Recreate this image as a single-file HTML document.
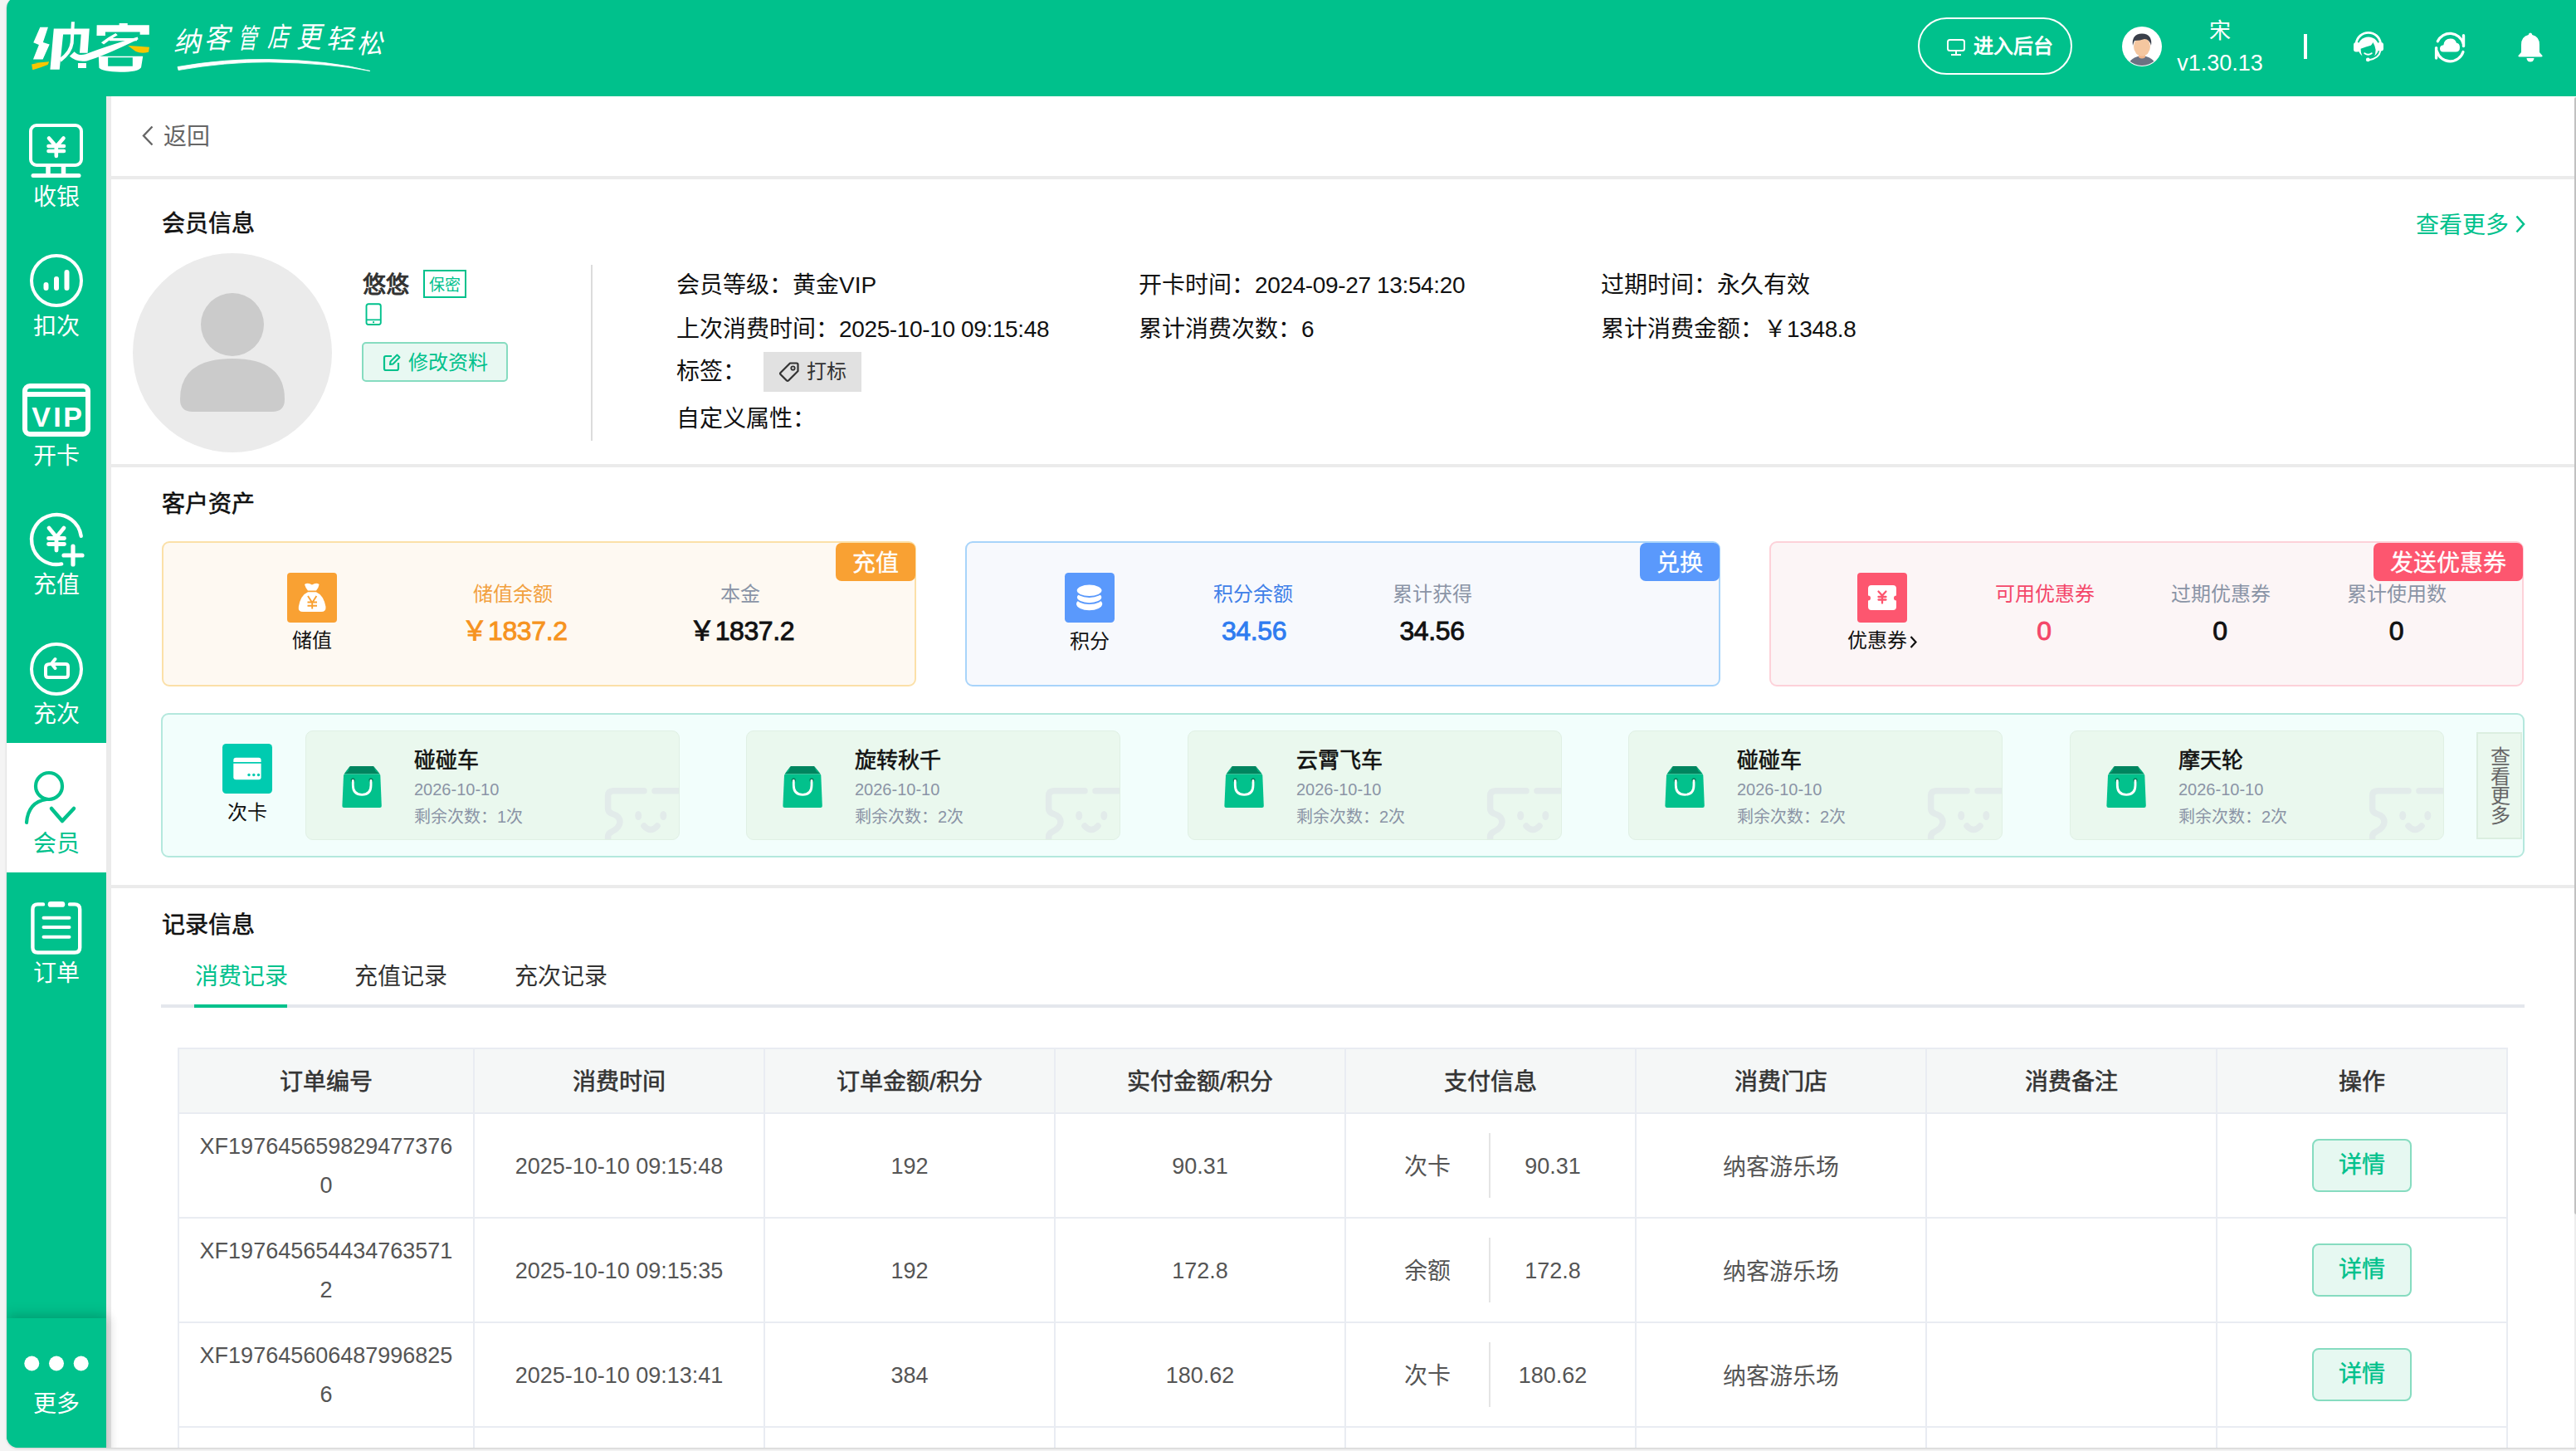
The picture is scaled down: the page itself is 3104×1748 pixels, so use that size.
<!DOCTYPE html>
<html lang="zh-CN">
<head>
<meta charset="utf-8">
<style>
*{box-sizing:border-box;margin:0;padding:0}
html,body{width:3104px;height:1748px;overflow:hidden;background:#f4f4f4;font-family:"Liberation Sans",sans-serif;}
.a{position:absolute;line-height:1;white-space:nowrap}
#win{position:absolute;left:8px;top:-4px;width:3110px;height:1748px;border-radius:14px;overflow:hidden;background:#fff;box-shadow:0 1px 3px rgba(0,0,0,0.18)}
#pg{position:absolute;left:-8px;top:4px;width:3104px;height:1748px}
#hdr{position:absolute;left:0;top:0;width:3104px;height:116px;background:#00c18c}
#side{position:absolute;left:0;top:116px;width:128px;height:1640px;background:#00c18c}
#strip{position:absolute;left:128px;top:116px;width:6px;height:1640px;background:#ebebeb}
.div4{position:absolute;left:134px;width:2970px;height:4px;background:#ebebeb}
</style>
</head>
<body>
<div id="win"><div id="pg">
<div id="hdr"></div>
<div id="side"></div>
<div id="strip"></div>
<div class="div4" style="top:212px"></div>
<div class="div4" style="top:559px"></div>
<div class="div4" style="top:1066px"></div>
<svg style="position:absolute;left:30px;top:20px;overflow:visible;" width="160" height="75" viewBox="0 0 160 75"><g transform="scale(0.06211)" fill="#fff"><path d="M295 205 H450 L352 500 L478 540 L348 830 H160 L272 548 L165 505Z"/><path d="M560 235 H1252 L1218 705 H1062 L1090 345 H742 L672 1025 H490Z"/><path d="M900 100 H965 L945 520 Q915 720 700 880 L680 800 Q860 680 880 500Z"/><path d="M868 770 Q1000 890 1200 860 Q1500 780 2200 440 L2185 395 Q1500 600 1180 730 Q1040 770 960 680Z"/><path d="M1030 900 H1190 V1000 H1030Z"/><path d="M1395 165 H1830 V128 H1992 V165 H2412 V352 H2232 V298 H1560 V372 H1392Z"/><path d="M1480 505 Q1620 390 1760 320 L1800 360 Q1660 440 1530 540Z"/><path d="M1640 420 H2190 L2170 470 H1640Z"/><path fill-rule="evenodd" d="M1430 770 H2290 L2255 985 Q2200 1075 1850 1075 Q1500 1065 1440 995Z M1612 792 H2090 V962 H1612Z"/><path fill="#f7c600" d="M130 925 Q300 885 470 875 L445 935 Q300 995 150 1035Z"/><path fill="#f7c600" d="M2000 565 Q2200 575 2415 590 L2400 690 Q2250 725 2150 675Z"/></g></svg>
<div class="a" style="left:211.04px;top:33.5px;font-size:33.0px;font-weight:100;color:#fff;transform:skewX(-12deg) scaleX(1.00);transform-origin:0 50%">纳</div>
<div class="a" style="left:248.95000000000002px;top:29.0px;font-size:34.2px;font-weight:100;color:#fff;transform:skewX(-12deg) scaleX(0.91);transform-origin:0 50%">客</div>
<div class="a" style="left:288.04px;top:30.1px;font-size:33.0px;font-weight:100;color:#fff;transform:skewX(-12deg) scaleX(0.71);transform-origin:0 50%">管</div>
<div class="a" style="left:323.74px;top:27.9px;font-size:33.0px;font-weight:100;color:#fff;transform:skewX(-12deg) scaleX(0.78);transform-origin:0 50%">店</div>
<div class="a" style="left:358.86px;top:27.9px;font-size:35.4px;font-weight:100;color:#fff;transform:skewX(-12deg) scaleX(0.85);transform-origin:0 50%">更</div>
<div class="a" style="left:394.53000000000003px;top:32.4px;font-size:31.8px;font-weight:100;color:#fff;transform:skewX(-12deg) scaleX(1.06);transform-origin:0 50%">轻</div>
<div class="a" style="left:431.73px;top:38.0px;font-size:31.8px;font-weight:100;color:#fff;transform:skewX(-12deg) scaleX(0.98);transform-origin:0 50%">松</div>
<svg style="position:absolute;left:212px;top:68px;overflow:visible;" width="240" height="22" viewBox="0 0 240 22"><path d="M2 12.5 Q60 2.5 112 3.5 Q185 4.5 234 17.5 Q185 8 112 6.8 Q60 6.5 3 16.5Z" fill="#fff" stroke="#fff" stroke-width="0.8" stroke-linejoin="round"/></svg>
<div class="a" style="left:2311px;top:21px;width:186px;height:69px;border:2px solid #fff;border-radius:35px"></div>
<svg style="position:absolute;left:2346px;top:47px;overflow:visible;" width="22" height="20" viewBox="0 0 22 20"><rect x="1" y="1" width="20" height="13" rx="2.5" stroke="#fff" stroke-width="2" fill="none"/><path d="M11 14 V18 M5 19 H17" stroke="#fff" stroke-width="2"/></svg>
<div class="a" style="left:2378px;top:44px;font-size:24px;color:#fff;font-weight:700;">进入后台</div>
<svg style="position:absolute;left:2557px;top:32px;overflow:visible;" width="48" height="48" viewBox="0 0 48 48"><circle cx="24" cy="24" r="24" fill="#fff"/><clipPath id="ca"><circle cx="24" cy="24" r="23"/></clipPath><g clip-path="url(#ca)"><path d="M7 48 Q9 37 24 35 Q39 37 41 48Z" fill="#6b7282"/><path d="M20 31 H28 V37 Q24 40 20 37Z" fill="#f0b58a"/><ellipse cx="24" cy="24" rx="10" ry="11.5" fill="#f5c7a0"/><path d="M13 23 Q11 9 24 8.5 Q37 9 35 23 Q33 15 27 15 Q22 17 15 17 Q14 19 13 23Z" fill="#3a3f4a"/></g></svg>
<div class="a" style="left:2615.0px;width:120px;text-align:center;top:24px;font-size:26px;color:#fff;font-weight:400;">宋</div>
<div class="a" style="left:2615px;width:120px;text-align:center;top:63px;font-size:27px;color:#fff">v1.30.13</div>
<div class="a" style="left:2776px;top:41px;width:4px;height:30px;background:#fff"></div>
<svg style="position:absolute;left:2836px;top:38px;overflow:visible;" width="36" height="37" viewBox="0 0 36 37"><path d="M3.2 14 A14.8 14.8 0 0 1 32.5 14" stroke="#fff" stroke-width="2.8" fill="none"/><circle cx="17.8" cy="19" r="12.6" fill="#fff"/><rect x="0" y="13" width="7.5" height="11.5" rx="3" fill="#fff"/><rect x="28.5" y="13" width="7.5" height="10.5" rx="3" fill="#fff"/><path d="M8.6 20.7 Q15 18.3 20.8 16.7 Q22.5 15.5 23.3 13 Q26 17 26.6 22 Q26.8 27 24.2 31.5 L22 34 H12.5 L10.8 30.5 Q8.2 25 8.6 20.7Z" fill="#00c18c"/><path d="M13.3 26.2 Q17.5 29.3 21.7 26.2" stroke="#fff" stroke-width="2" fill="none" stroke-linecap="round"/><path d="M32.3 23.2 Q31 32 18.7 34.3" stroke="#fff" stroke-width="2" fill="none"/><circle cx="17.3" cy="33.9" r="2.4" fill="#fff"/></svg>
<svg style="position:absolute;left:2934px;top:38px;overflow:visible;" width="37" height="37" viewBox="0 0 37 37"><path d="M3.3 11.8 A16.5 16.5 0 0 1 34 14" stroke="#fff" stroke-width="3.2" fill="none" stroke-linecap="round"/><path d="M34.5 4.8 V17.5" stroke="#fff" stroke-width="3.4" stroke-linecap="round"/><path d="M34 24.5 A16.5 16.5 0 0 1 2.5 24" stroke="#fff" stroke-width="3.2" fill="none" stroke-linecap="round"/><path d="M1.6 19.6 V32" stroke="#fff" stroke-width="3.4" stroke-linecap="round"/><path d="M10 24.6 Q6 24.6 6 20.5 Q6 16.6 10.4 16.2 Q11.3 8.5 18.7 8.5 Q24.6 8.5 26 13.8 Q30 14.2 30 19.2 Q30 24.6 25 24.6Z" fill="#fff"/></svg>
<svg style="position:absolute;left:3034px;top:38px;overflow:visible;" width="30" height="37" viewBox="0 0 30 37"><path d="M15 1.5 Q17 1.5 17.3 4 Q26 6 26 16 V25 L29.5 29 Q30 30.5 28 30.5 H2 Q0 30.5 0.5 29 L4 25 V16 Q4 6 12.7 4 Q13 1.5 15 1.5Z" fill="#fff"/><path d="M10.5 32 A4.5 4.5 0 0 0 19.5 32Z" fill="#fff"/></svg>
<div class="a" style="left:8.0px;width:120px;text-align:center;top:224px;font-size:28px;color:#fff;font-weight:400;">收银</div>
<div class="a" style="left:8.0px;width:120px;text-align:center;top:380px;font-size:28px;color:#fff;font-weight:400;">扣次</div>
<div class="a" style="left:8.0px;width:120px;text-align:center;top:536px;font-size:28px;color:#fff;font-weight:400;">开卡</div>
<div class="a" style="left:8.0px;width:120px;text-align:center;top:691px;font-size:28px;color:#fff;font-weight:400;">充值</div>
<div class="a" style="left:8.0px;width:120px;text-align:center;top:847px;font-size:28px;color:#fff;font-weight:400;">充次</div>
<div class="a" style="left:8px;top:895.0px;width:120px;height:156px;background:#fff"></div>
<div class="a" style="left:8.0px;width:120px;text-align:center;top:1003px;font-size:28px;color:#00c18c;font-weight:400;">会员</div>
<div class="a" style="left:8.0px;width:120px;text-align:center;top:1159px;font-size:28px;color:#fff;font-weight:400;">订单</div>
<svg style="position:absolute;left:35px;top:149px;overflow:visible;" width="66" height="66" viewBox="0 0 66 66"><rect x="2" y="2" width="61" height="48" rx="7" stroke="#fff" stroke-width="4" fill="none"/><path d="M23 50 V61 M41.5 50 V61" stroke="#fff" stroke-width="5.5"/><path d="M5 62.5 H60" stroke="#fff" stroke-width="5" stroke-linecap="round"/><path d="M24 17.5 L32.8 27.5 L41.5 17.5 M32.8 28 V39 M23.5 27 H42 M23.5 33 H42" stroke="#fff" stroke-width="4.6" fill="none" stroke-linecap="round" stroke-linejoin="round"/></svg>
<svg style="position:absolute;left:36px;top:306px;overflow:visible;" width="64" height="64" viewBox="0 0 64 64"><circle cx="32" cy="32" r="30" stroke="#fff" stroke-width="4" fill="none"/><path d="M19.5 37 V41 M32 30 V41 M44.5 22 V41" stroke="#fff" stroke-width="6" stroke-linecap="round"/></svg>
<svg style="position:absolute;left:27px;top:462px;overflow:visible;" width="82" height="64" viewBox="0 0 82 64"><rect x="3" y="3" width="76" height="58" rx="6" stroke="#fff" stroke-width="6" fill="none"/><path d="M4 13 H78" stroke="#fff" stroke-width="6"/><g font-family="Liberation Sans" font-weight="700" font-size="34" fill="#fff" text-anchor="middle"><text x="22.5" y="51.5">V</text><text x="42" y="51.5">I</text><text x="60.5" y="51.5">P</text></g></svg>
<svg style="position:absolute;left:36px;top:618px;overflow:visible;" width="64" height="64" viewBox="0 0 64 64"><path d="M62 33 A30 30 0 1 0 33 62" stroke="#fff" stroke-width="4.4" fill="none" stroke-linecap="round" transform="rotate(-10 32 32)"/><path d="M23 18 L32 29 L41 18 M32 29 V45 M22.5 30.5 H41.5 M22.5 37.5 H41.5" stroke="#fff" stroke-width="4.8" fill="none" stroke-linecap="round" stroke-linejoin="round"/><path d="M52 40 V62 M41 51 H63" stroke="#fff" stroke-width="5.2" stroke-linecap="round"/></svg>
<svg style="position:absolute;left:36px;top:774px;overflow:visible;" width="64" height="64" viewBox="0 0 64 64"><circle cx="32" cy="32" r="30" stroke="#fff" stroke-width="4" fill="none"/><path d="M24 26 Q19 26 19 30 V39 Q19 42 22 42 H43 Q46 42 46 39 V29 Q46 26 43 26 H30" stroke="#fff" stroke-width="4" fill="none" stroke-linecap="round"/><path d="M30.5 20 L26 25.5 L30.5 31" stroke="#fff" stroke-width="4" fill="none" stroke-linecap="round" stroke-linejoin="round"/></svg>
<svg style="position:absolute;left:28px;top:928px;overflow:visible;" width="66" height="66" viewBox="0 0 66 66"><circle cx="31" cy="19" r="16" stroke="#00c18c" stroke-width="4.2" fill="none"/><path d="M4 63 Q6 38 28 35" stroke="#00c18c" stroke-width="4.2" fill="none" stroke-linecap="round"/><path d="M34 46 L47 61 L61 46" stroke="#00c18c" stroke-width="4.5" fill="none" stroke-linecap="round" stroke-linejoin="round"/></svg>
<svg style="position:absolute;left:37px;top:1085px;overflow:visible;" width="62" height="66" viewBox="0 0 62 66"><path d="M15 4.4 H8.5 Q2.4 4.4 2.4 10.5 V56.5 Q2.4 62.5 8.5 62.5 H53 Q59.2 62.5 59.2 56.5 V10.5 Q59.2 4.4 53 4.4 H47" stroke="#fff" stroke-width="4.4" fill="none" stroke-linecap="round"/><rect x="20.7" y="1" width="20.6" height="6.8" rx="3.4" fill="#fff"/><path d="M15.5 20.8 H46.5 M15.5 32 H46.5 M15.5 43.7 H46.5" stroke="#fff" stroke-width="4" stroke-linecap="round"/></svg>
<div class="a" style="left:8px;top:1588px;width:120px;height:170px;background:#00c18c;box-shadow:0 -6px 14px rgba(0,0,0,0.12), 6px 0 10px rgba(0,0,0,0.09)"></div>
<svg style="position:absolute;left:8px;top:1630px;overflow:visible;" width="120" height="26" viewBox="0 0 120 26"><circle cx="30.3" cy="12.5" r="9" fill="#fff"/><circle cx="60" cy="12.5" r="9" fill="#fff"/><circle cx="89.7" cy="12.5" r="9" fill="#fff"/></svg>
<div class="a" style="left:8.0px;width:120px;text-align:center;top:1678px;font-size:28px;color:#fff;font-weight:400;">更多</div>
<svg style="position:absolute;left:170px;top:150px;overflow:visible;" width="16" height="28" viewBox="0 0 16 28"><path d="M13.5 2.5 L3 13.5 L13.5 24.5" stroke="#666" stroke-width="2.4" fill="none"/></svg>
<div class="a" style="left:197px;top:151px;font-size:28px;color:#666;font-weight:400;">返回</div>
<div class="a" style="left:195px;top:256px;font-size:28px;color:#111;font-weight:500;-webkit-text-stroke:0.6px currentColor;">会员信息</div>
<div class="a" style="left:195px;top:594px;font-size:28px;color:#111;font-weight:500;-webkit-text-stroke:0.6px currentColor;">客户资产</div>
<div class="a" style="left:195px;top:1101px;font-size:28px;color:#111;font-weight:500;-webkit-text-stroke:0.6px currentColor;">记录信息</div>
<div class="a" style="left:2911px;top:258px;font-size:28px;color:#00c18c;font-weight:400;">查看更多</div>
<svg style="position:absolute;left:3030px;top:258px;overflow:visible;" width="14" height="24" viewBox="0 0 14 24"><path d="M2.5 2.5 L11 12 L2.5 21.5" stroke="#00c18c" stroke-width="2.6" fill="none"/></svg>
<svg style="position:absolute;left:160px;top:305px;overflow:visible;" width="240" height="240" viewBox="0 0 240 240"><circle cx="120" cy="120" r="120" fill="#ebebeb"/><circle cx="120" cy="86" r="38" fill="#cbcbcb"/><path d="M57 176 Q57 127 120 127 Q183 127 183 176 Q183 191 168 191 H72 Q57 191 57 176Z" fill="#cbcbcb"/></svg>
<div class="a" style="left:437px;top:330px;font-size:28px;color:#333;font-weight:700;">悠悠</div>
<div class="a" style="left:510px;top:325px;width:52px;height:34px;border:2px solid #00c18c;color:#00c18c;font-size:19px;line-height:33px;text-align:center">保密</div>
<svg style="position:absolute;left:439px;top:365px;overflow:visible;" width="22" height="28" viewBox="0 0 22 28"><rect x="2.5" y="1.3" width="17.3" height="24.7" rx="2.5" stroke="#00c18c" stroke-width="1.9" fill="none"/><path d="M3 20.3 H19.5" stroke="#00c18c" stroke-width="1.7"/><circle cx="11.1" cy="23.2" r="1.1" fill="#00c18c"/></svg>
<div class="a" style="left:436px;top:412px;width:176px;height:48px;border:2px solid #86dcc0;background:#e8f8f2;border-radius:5px"></div>
<svg style="position:absolute;left:461px;top:426px;overflow:visible;" width="22" height="22" viewBox="0 0 22 22"><path d="M11 3 H4 Q2 3 2 5 V18 Q2 20 4 20 H17 Q19 20 19 18 V11" stroke="#00c18c" stroke-width="2.2" fill="none"/><path d="M9 13 L9.5 9.5 L17.5 1.5 L20.5 4.5 L12.5 12.5Z" stroke="#00c18c" stroke-width="2" fill="none" stroke-linejoin="round"/></svg>
<div class="a" style="left:492px;top:425px;font-size:24px;color:#00c18c;font-weight:500;">修改资料</div>
<div class="a" style="left:712px;top:319px;width:2px;height:212px;background:#dcdcdc"></div>
<div class="a" style="left:815px;top:330px;font-size:28px;color:#111;font-weight:400;">会员等级：黄金VIP</div>
<div class="a" style="left:815px;top:383px;font-size:28px;color:#111;font-weight:400;">上次消费时间：<span style="letter-spacing:-0.36px">2025-10-10 09:15:48</span></div>
<div class="a" style="left:815px;top:434px;font-size:28px;color:#111;font-weight:400;">标签：</div>
<div class="a" style="left:920px;top:424px;width:118px;height:48px;background:#e1e1e1"></div>
<svg style="position:absolute;left:938px;top:435px;overflow:visible;" width="26" height="26" viewBox="0 0 26 26"><path d="M14 2.5 H22 Q23.5 2.5 23.5 4 V12 L12 23.5 Q11 24.5 10 23.5 L2.5 16 Q1.5 15 2.5 14Z" stroke="#333" stroke-width="2.2" fill="none" stroke-linejoin="round" transform="rotate(0)"/><circle cx="17.5" cy="8.5" r="2.2" stroke="#333" stroke-width="1.8" fill="none"/></svg>
<div class="a" style="left:972px;top:436px;font-size:24px;color:#333;font-weight:400;">打标</div>
<div class="a" style="left:815px;top:491px;font-size:28px;color:#111;font-weight:400;">自定义属性：</div>
<div class="a" style="left:1372px;top:330px;font-size:28px;color:#111;font-weight:400;">开卡时间：<span style="letter-spacing:-0.36px">2024-09-27 13:54:20</span></div>
<div class="a" style="left:1372px;top:383px;font-size:28px;color:#111;font-weight:400;">累计消费次数：6</div>
<div class="a" style="left:1929px;top:330px;font-size:28px;color:#111;font-weight:400;">过期时间：永久有效</div>
<div class="a" style="left:1929px;top:383px;font-size:28px;color:#111;font-weight:400;">累计消费金额：￥<span style="letter-spacing:-0.36px">1348.8</span></div>
<div class="a" style="left:195px;top:652px;width:909px;height:175px;border:2px solid #fbe0a8;background:#fef9f2;border-radius:9px"></div>
<div class="a" style="left:1007px;top:654px;width:96px;height:46px;background:#f9a133;border-radius:7px;color:#fff;font-size:28px;font-weight:500;-webkit-text-stroke:0.3px #fff;text-align:center;line-height:49px">充值</div>
<div class="a" style="left:1163px;top:652px;width:910px;height:175px;border:2px solid #a8d4fa;background:#f7f9fd;border-radius:9px"></div>
<div class="a" style="left:1976px;top:654px;width:96px;height:46px;background:#5a99fc;border-radius:7px;color:#fff;font-size:28px;font-weight:500;-webkit-text-stroke:0.3px #fff;text-align:center;line-height:49px">兑换</div>
<div class="a" style="left:2132px;top:652px;width:909px;height:175px;border:2px solid #fdd1d9;background:#fcf5f6;border-radius:9px"></div>
<div class="a" style="left:2860px;top:654px;width:180px;height:46px;background:#fd566f;border-radius:7px;color:#fff;font-size:28px;font-weight:500;-webkit-text-stroke:0.3px #fff;text-align:center;line-height:49px">发送优惠券</div>
<svg style="position:absolute;left:346px;top:690px;overflow:visible;" width="60" height="60" viewBox="0 0 60 60"><rect width="60" height="60" rx="4" fill="#f9a133"/><path d="M21 14 Q25 11.5 30 14.5 Q35 11.5 38.6 14 Q38 18 35 21.5 H25 Q22 18 21 14Z" fill="#fff"/><path d="M25 23.2 H35 Q44 27 46.5 41 Q47 47 41 47 H19 Q13 47 13.8 41 Q16 27 25 23.2Z" fill="#fff"/><path d="M25 28 L30.2 36 L35.4 28 M30.2 36 V43.5 M24.5 35.5 H36 M24.5 39.8 H36" stroke="#f9a133" stroke-width="1.9" fill="none"/></svg>
<svg style="position:absolute;left:1283px;top:690px;overflow:visible;" width="60" height="60" viewBox="0 0 60 60"><rect width="60" height="60" rx="4.5" fill="#5a99fc"/><ellipse cx="29.6" cy="37.6" rx="15.6" ry="7.6" fill="#fff"/><ellipse cx="29.6" cy="29.5" rx="15.6" ry="7.6" fill="#fff" stroke="#5a99fc" stroke-width="1.8"/><ellipse cx="29.6" cy="21.3" rx="15.8" ry="7.7" fill="#fff" stroke="#5a99fc" stroke-width="1.8"/></svg>
<svg style="position:absolute;left:2238px;top:690px;overflow:visible;" width="60" height="60" viewBox="0 0 60 60"><rect width="60" height="60" rx="4" fill="#fd566f"/><path d="M17 15 H43 Q47 15 47 19 V27.5 A3 3 0 0 0 47 33.5 V41 Q47 45 43 45 H17 Q13 45 13 41 V33.5 A3 3 0 0 0 13 27.5 V19 Q13 15 17 15Z" fill="#fff"/><path d="M25.5 22.5 L30 27.5 L34.5 22.5 M30 27.5 V36.5 M25.5 29 H34.5 M25.5 32.5 H34.5" stroke="#fd566f" stroke-width="2.3" fill="none" stroke-linecap="round"/></svg>
<div class="a" style="left:276.0px;width:200px;text-align:center;top:760px;font-size:24px;color:#111;font-weight:400;">储值</div>
<div class="a" style="left:1213.0px;width:200px;text-align:center;top:761px;font-size:24px;color:#111;font-weight:400;">积分</div>
<div class="a" style="left:2226px;top:760px;font-size:24px;color:#111">优惠券</div>
<svg style="position:absolute;left:2300px;top:764px;overflow:visible;" width="12" height="18" viewBox="0 0 12 18"><path d="M2.5 3 L8.5 9.5 L2.5 16" stroke="#111" stroke-width="2.2" fill="none"/></svg>
<div class="a" style="left:467.6px;width:300px;text-align:center;top:704px;font-size:24px;color:#f2a13f;font-weight:400;">储值余额</div>
<div class="a" style="left:741.7px;width:300px;text-align:center;top:704px;font-size:24px;color:#8a94a6;font-weight:400;">本金</div>
<div class="a" style="left:1360.0px;width:300px;text-align:center;top:704px;font-size:24px;color:#3f80e8;font-weight:400;">积分余额</div>
<div class="a" style="left:1575.5px;width:300px;text-align:center;top:704px;font-size:24px;color:#8a94a6;font-weight:400;">累计获得</div>
<div class="a" style="left:2313.5px;width:300px;text-align:center;top:704px;font-size:24px;color:#f4476a;font-weight:400;">可用优惠券</div>
<div class="a" style="left:2525.5px;width:300px;text-align:center;top:704px;font-size:24px;color:#8a94a6;font-weight:400;">过期优惠券</div>
<div class="a" style="left:2738.0px;width:300px;text-align:center;top:704px;font-size:24px;color:#8a94a6;font-weight:400;">累计使用数</div>
<div class="a" style="left:420px;width:400px;text-align:center;top:744px;font-size:32px;font-weight:400;-webkit-text-stroke:0.9px #f6931f;letter-spacing:-0.4px;color:#f6931f">￥1837.2</div>
<div class="a" style="left:693.6px;width:400px;text-align:center;top:744px;font-size:32px;font-weight:400;-webkit-text-stroke:0.9px #111;letter-spacing:-0.4px;color:#111">￥1837.2</div>
<div class="a" style="left:1311px;width:400px;text-align:center;top:744px;font-size:32px;font-weight:400;-webkit-text-stroke:0.9px #2f7cf0;letter-spacing:-0.4px;color:#2f7cf0">34.56</div>
<div class="a" style="left:1525.5px;width:400px;text-align:center;top:744px;font-size:32px;font-weight:400;-webkit-text-stroke:0.9px #111;letter-spacing:-0.4px;color:#111">34.56</div>
<div class="a" style="left:2263px;width:400px;text-align:center;top:744px;font-size:32px;font-weight:400;-webkit-text-stroke:0.9px #f4476a;letter-spacing:-0.4px;color:#f4476a">0</div>
<div class="a" style="left:2475px;width:400px;text-align:center;top:744px;font-size:32px;font-weight:400;-webkit-text-stroke:0.9px #111;letter-spacing:-0.4px;color:#111">0</div>
<div class="a" style="left:2687.5px;width:400px;text-align:center;top:744px;font-size:32px;font-weight:400;-webkit-text-stroke:0.9px #111;letter-spacing:-0.4px;color:#111">0</div>
<div class="a" style="left:194px;top:859px;width:2848px;height:174px;border:2px solid #b4e8dd;background:#f2fefc;border-radius:9px"></div>
<svg style="position:absolute;left:268px;top:896px;overflow:visible;" width="60" height="60" viewBox="0 0 60 60"><rect width="60" height="60" rx="4.5" fill="#00cbb0"/><rect x="13.3" y="16.7" width="33.3" height="26.5" rx="3" fill="#fff"/><path d="M13 22.8 H47" stroke="#00cbb0" stroke-width="1.7"/><circle cx="32" cy="37.5" r="1.7" fill="#00cbb0"/><circle cx="37.8" cy="37.5" r="1.7" fill="#00cbb0"/><circle cx="43.5" cy="37.5" r="1.7" fill="#00cbb0"/></svg>
<div class="a" style="left:238.0px;width:120px;text-align:center;top:967px;font-size:24px;color:#111;font-weight:400;">次卡</div>
<div class="a" style="left:368px;top:880px;width:451px;height:132px;background:#eaf8ee;border:1px solid #e0f0e4;border-radius:9px;overflow:hidden"><svg style="position:absolute;left:358px;top:63px" width="100" height="75" viewBox="0 0 100 75"><path d="M5.6 78 V64 Q5.6 60 10 58 Q20 53 20 46 Q20 39 10 36 Q5.6 34 5.6 30 V15 Q5.6 8.7 12 8.7 H49 M62 8.7 H100" stroke="#e2ebea" stroke-width="7.5" fill="none" stroke-linecap="round"/><ellipse cx="42.2" cy="38.5" rx="4" ry="5.5" fill="#e2ebea"/><ellipse cx="72.3" cy="38.5" rx="4" ry="5.5" fill="#e2ebea"/><path d="M49 51 Q57 60 65 51" stroke="#e2ebea" stroke-width="7.5" fill="none" stroke-linecap="round"/></svg></div>
<svg style="position:absolute;left:411px;top:922px;overflow:visible;" width="50" height="52" viewBox="0 0 50 52"><path d="M10.8 1 H39 L46.7 10.6 H3.6Z" fill="#00855f"/><path d="M10.8 1 L8.5 7 L3.6 10.6Z M39 1 L41.5 7 L46.7 10.6Z" fill="#02b07f"/><path d="M5 10.4 H45.5 Q47.2 10.4 47.3 12 L48.8 48.5 Q48.9 51 46.5 51 H3.7 Q1.3 51 1.4 48.5 L3 12 Q3.1 10.4 5 10.4Z" fill="#02c18c"/><circle cx="14.3" cy="17.8" r="2.6" fill="#00855f"/><circle cx="36" cy="17.8" r="2.6" fill="#00855f"/><path d="M14.3 18.5 V24 Q14.3 35.3 25.2 35.3 Q36 35.3 36 24 V18.5" stroke="#fff" stroke-width="2.8" fill="none" stroke-linecap="round"/></svg>
<div class="a" style="left:499px;top:903px;font-size:26px;color:#111;font-weight:500;-webkit-text-stroke:0.6px currentColor;">碰碰车</div>
<div class="a" style="left:499px;top:941px;font-size:20px;color:#8a94a6">2026-10-10</div>
<div class="a" style="left:499px;top:974px;font-size:20px;color:#8a94a6;font-weight:400;">剩余次数：1次</div>
<div class="a" style="left:899px;top:880px;width:451px;height:132px;background:#eaf8ee;border:1px solid #e0f0e4;border-radius:9px;overflow:hidden"><svg style="position:absolute;left:358px;top:63px" width="100" height="75" viewBox="0 0 100 75"><path d="M5.6 78 V64 Q5.6 60 10 58 Q20 53 20 46 Q20 39 10 36 Q5.6 34 5.6 30 V15 Q5.6 8.7 12 8.7 H49 M62 8.7 H100" stroke="#e2ebea" stroke-width="7.5" fill="none" stroke-linecap="round"/><ellipse cx="42.2" cy="38.5" rx="4" ry="5.5" fill="#e2ebea"/><ellipse cx="72.3" cy="38.5" rx="4" ry="5.5" fill="#e2ebea"/><path d="M49 51 Q57 60 65 51" stroke="#e2ebea" stroke-width="7.5" fill="none" stroke-linecap="round"/></svg></div>
<svg style="position:absolute;left:942px;top:922px;overflow:visible;" width="50" height="52" viewBox="0 0 50 52"><path d="M10.8 1 H39 L46.7 10.6 H3.6Z" fill="#00855f"/><path d="M10.8 1 L8.5 7 L3.6 10.6Z M39 1 L41.5 7 L46.7 10.6Z" fill="#02b07f"/><path d="M5 10.4 H45.5 Q47.2 10.4 47.3 12 L48.8 48.5 Q48.9 51 46.5 51 H3.7 Q1.3 51 1.4 48.5 L3 12 Q3.1 10.4 5 10.4Z" fill="#02c18c"/><circle cx="14.3" cy="17.8" r="2.6" fill="#00855f"/><circle cx="36" cy="17.8" r="2.6" fill="#00855f"/><path d="M14.3 18.5 V24 Q14.3 35.3 25.2 35.3 Q36 35.3 36 24 V18.5" stroke="#fff" stroke-width="2.8" fill="none" stroke-linecap="round"/></svg>
<div class="a" style="left:1030px;top:903px;font-size:26px;color:#111;font-weight:500;-webkit-text-stroke:0.6px currentColor;">旋转秋千</div>
<div class="a" style="left:1030px;top:941px;font-size:20px;color:#8a94a6">2026-10-10</div>
<div class="a" style="left:1030px;top:974px;font-size:20px;color:#8a94a6;font-weight:400;">剩余次数：2次</div>
<div class="a" style="left:1431px;top:880px;width:451px;height:132px;background:#eaf8ee;border:1px solid #e0f0e4;border-radius:9px;overflow:hidden"><svg style="position:absolute;left:358px;top:63px" width="100" height="75" viewBox="0 0 100 75"><path d="M5.6 78 V64 Q5.6 60 10 58 Q20 53 20 46 Q20 39 10 36 Q5.6 34 5.6 30 V15 Q5.6 8.7 12 8.7 H49 M62 8.7 H100" stroke="#e2ebea" stroke-width="7.5" fill="none" stroke-linecap="round"/><ellipse cx="42.2" cy="38.5" rx="4" ry="5.5" fill="#e2ebea"/><ellipse cx="72.3" cy="38.5" rx="4" ry="5.5" fill="#e2ebea"/><path d="M49 51 Q57 60 65 51" stroke="#e2ebea" stroke-width="7.5" fill="none" stroke-linecap="round"/></svg></div>
<svg style="position:absolute;left:1474px;top:922px;overflow:visible;" width="50" height="52" viewBox="0 0 50 52"><path d="M10.8 1 H39 L46.7 10.6 H3.6Z" fill="#00855f"/><path d="M10.8 1 L8.5 7 L3.6 10.6Z M39 1 L41.5 7 L46.7 10.6Z" fill="#02b07f"/><path d="M5 10.4 H45.5 Q47.2 10.4 47.3 12 L48.8 48.5 Q48.9 51 46.5 51 H3.7 Q1.3 51 1.4 48.5 L3 12 Q3.1 10.4 5 10.4Z" fill="#02c18c"/><circle cx="14.3" cy="17.8" r="2.6" fill="#00855f"/><circle cx="36" cy="17.8" r="2.6" fill="#00855f"/><path d="M14.3 18.5 V24 Q14.3 35.3 25.2 35.3 Q36 35.3 36 24 V18.5" stroke="#fff" stroke-width="2.8" fill="none" stroke-linecap="round"/></svg>
<div class="a" style="left:1562px;top:903px;font-size:26px;color:#111;font-weight:500;-webkit-text-stroke:0.6px currentColor;">云霄飞车</div>
<div class="a" style="left:1562px;top:941px;font-size:20px;color:#8a94a6">2026-10-10</div>
<div class="a" style="left:1562px;top:974px;font-size:20px;color:#8a94a6;font-weight:400;">剩余次数：2次</div>
<div class="a" style="left:1962px;top:880px;width:451px;height:132px;background:#eaf8ee;border:1px solid #e0f0e4;border-radius:9px;overflow:hidden"><svg style="position:absolute;left:358px;top:63px" width="100" height="75" viewBox="0 0 100 75"><path d="M5.6 78 V64 Q5.6 60 10 58 Q20 53 20 46 Q20 39 10 36 Q5.6 34 5.6 30 V15 Q5.6 8.7 12 8.7 H49 M62 8.7 H100" stroke="#e2ebea" stroke-width="7.5" fill="none" stroke-linecap="round"/><ellipse cx="42.2" cy="38.5" rx="4" ry="5.5" fill="#e2ebea"/><ellipse cx="72.3" cy="38.5" rx="4" ry="5.5" fill="#e2ebea"/><path d="M49 51 Q57 60 65 51" stroke="#e2ebea" stroke-width="7.5" fill="none" stroke-linecap="round"/></svg></div>
<svg style="position:absolute;left:2005px;top:922px;overflow:visible;" width="50" height="52" viewBox="0 0 50 52"><path d="M10.8 1 H39 L46.7 10.6 H3.6Z" fill="#00855f"/><path d="M10.8 1 L8.5 7 L3.6 10.6Z M39 1 L41.5 7 L46.7 10.6Z" fill="#02b07f"/><path d="M5 10.4 H45.5 Q47.2 10.4 47.3 12 L48.8 48.5 Q48.9 51 46.5 51 H3.7 Q1.3 51 1.4 48.5 L3 12 Q3.1 10.4 5 10.4Z" fill="#02c18c"/><circle cx="14.3" cy="17.8" r="2.6" fill="#00855f"/><circle cx="36" cy="17.8" r="2.6" fill="#00855f"/><path d="M14.3 18.5 V24 Q14.3 35.3 25.2 35.3 Q36 35.3 36 24 V18.5" stroke="#fff" stroke-width="2.8" fill="none" stroke-linecap="round"/></svg>
<div class="a" style="left:2093px;top:903px;font-size:26px;color:#111;font-weight:500;-webkit-text-stroke:0.6px currentColor;">碰碰车</div>
<div class="a" style="left:2093px;top:941px;font-size:20px;color:#8a94a6">2026-10-10</div>
<div class="a" style="left:2093px;top:974px;font-size:20px;color:#8a94a6;font-weight:400;">剩余次数：2次</div>
<div class="a" style="left:2494px;top:880px;width:451px;height:132px;background:#eaf8ee;border:1px solid #e0f0e4;border-radius:9px;overflow:hidden"><svg style="position:absolute;left:358px;top:63px" width="100" height="75" viewBox="0 0 100 75"><path d="M5.6 78 V64 Q5.6 60 10 58 Q20 53 20 46 Q20 39 10 36 Q5.6 34 5.6 30 V15 Q5.6 8.7 12 8.7 H49 M62 8.7 H100" stroke="#e2ebea" stroke-width="7.5" fill="none" stroke-linecap="round"/><ellipse cx="42.2" cy="38.5" rx="4" ry="5.5" fill="#e2ebea"/><ellipse cx="72.3" cy="38.5" rx="4" ry="5.5" fill="#e2ebea"/><path d="M49 51 Q57 60 65 51" stroke="#e2ebea" stroke-width="7.5" fill="none" stroke-linecap="round"/></svg></div>
<svg style="position:absolute;left:2537px;top:922px;overflow:visible;" width="50" height="52" viewBox="0 0 50 52"><path d="M10.8 1 H39 L46.7 10.6 H3.6Z" fill="#00855f"/><path d="M10.8 1 L8.5 7 L3.6 10.6Z M39 1 L41.5 7 L46.7 10.6Z" fill="#02b07f"/><path d="M5 10.4 H45.5 Q47.2 10.4 47.3 12 L48.8 48.5 Q48.9 51 46.5 51 H3.7 Q1.3 51 1.4 48.5 L3 12 Q3.1 10.4 5 10.4Z" fill="#02c18c"/><circle cx="14.3" cy="17.8" r="2.6" fill="#00855f"/><circle cx="36" cy="17.8" r="2.6" fill="#00855f"/><path d="M14.3 18.5 V24 Q14.3 35.3 25.2 35.3 Q36 35.3 36 24 V18.5" stroke="#fff" stroke-width="2.8" fill="none" stroke-linecap="round"/></svg>
<div class="a" style="left:2625px;top:903px;font-size:26px;color:#111;font-weight:500;-webkit-text-stroke:0.6px currentColor;">摩天轮</div>
<div class="a" style="left:2625px;top:941px;font-size:20px;color:#8a94a6">2026-10-10</div>
<div class="a" style="left:2625px;top:974px;font-size:20px;color:#8a94a6;font-weight:400;">剩余次数：2次</div>
<div class="a" style="left:2984px;top:882px;width:55px;height:129px;background:#eaf8ee;border:2px solid #dbeee0"></div>
<div class="a" style="left:2988px;top:900px;width:50px;font-size:24px;line-height:23.5px;white-space:normal;text-align:center;color:#666">查<br>看<br>更<br>多</div>
<div class="a" style="left:235px;top:1163px;font-size:28px;color:#00c18c;font-weight:500;">消费记录</div>
<div class="a" style="left:427px;top:1163px;font-size:28px;color:#333;font-weight:500;">充值记录</div>
<div class="a" style="left:620px;top:1163px;font-size:28px;color:#333;font-weight:500;">充次记录</div>
<div class="a" style="left:194px;top:1210px;width:2848px;height:4px;background:#e4e7ed"></div>
<div class="a" style="left:234px;top:1210px;width:112px;height:4px;background:#00c18c"></div>
<div class="a" style="left:214px;top:1262px;width:2807px;height:78px;background:#f5f7f7"></div>
<div class="a" style="left:214px;top:1262px;width:2807px;height:2px;background:#e9ecf2"></div>
<div class="a" style="left:214px;top:1340px;width:2807px;height:2px;background:#e9ecf2"></div>
<div class="a" style="left:214px;top:1466px;width:2807px;height:2px;background:#e9ecf2"></div>
<div class="a" style="left:214px;top:1592px;width:2807px;height:2px;background:#e9ecf2"></div>
<div class="a" style="left:214px;top:1718px;width:2807px;height:2px;background:#e9ecf2"></div>
<div class="a" style="left:214px;top:1262px;width:2px;height:500px;background:#e9ecf2"></div>
<div class="a" style="left:570px;top:1262px;width:2px;height:500px;background:#e9ecf2"></div>
<div class="a" style="left:920px;top:1262px;width:2px;height:500px;background:#e9ecf2"></div>
<div class="a" style="left:1270px;top:1262px;width:2px;height:500px;background:#e9ecf2"></div>
<div class="a" style="left:1620px;top:1262px;width:2px;height:500px;background:#e9ecf2"></div>
<div class="a" style="left:1970px;top:1262px;width:2px;height:500px;background:#e9ecf2"></div>
<div class="a" style="left:2320px;top:1262px;width:2px;height:500px;background:#e9ecf2"></div>
<div class="a" style="left:2670px;top:1262px;width:2px;height:500px;background:#e9ecf2"></div>
<div class="a" style="left:3020px;top:1262px;width:2px;height:500px;background:#e9ecf2"></div>
<div class="a" style="left:223.0px;width:340px;text-align:center;top:1290px;font-size:28px;color:#333;font-weight:500;-webkit-text-stroke:0.6px currentColor;">订单编号</div>
<div class="a" style="left:576.0px;width:340px;text-align:center;top:1290px;font-size:28px;color:#333;font-weight:500;-webkit-text-stroke:0.6px currentColor;">消费时间</div>
<div class="a" style="left:926.0px;width:340px;text-align:center;top:1290px;font-size:28px;color:#333;font-weight:500;-webkit-text-stroke:0.6px currentColor;">订单金额/积分</div>
<div class="a" style="left:1276.0px;width:340px;text-align:center;top:1290px;font-size:28px;color:#333;font-weight:500;-webkit-text-stroke:0.6px currentColor;">实付金额/积分</div>
<div class="a" style="left:1626.0px;width:340px;text-align:center;top:1290px;font-size:28px;color:#333;font-weight:500;-webkit-text-stroke:0.6px currentColor;">支付信息</div>
<div class="a" style="left:1976.0px;width:340px;text-align:center;top:1290px;font-size:28px;color:#333;font-weight:500;-webkit-text-stroke:0.6px currentColor;">消费门店</div>
<div class="a" style="left:2326.0px;width:340px;text-align:center;top:1290px;font-size:28px;color:#333;font-weight:500;-webkit-text-stroke:0.6px currentColor;">消费备注</div>
<div class="a" style="left:2676.0px;width:340px;text-align:center;top:1290px;font-size:28px;color:#333;font-weight:500;-webkit-text-stroke:0.6px currentColor;">操作</div>
<div class="a" style="left:215px;width:356px;text-align:center;top:1368px;font-size:27px;color:#555">XF197645659829477376</div>
<div class="a" style="left:215px;width:356px;text-align:center;top:1415px;font-size:27px;color:#555">0</div>
<div class="a" style="left:571px;width:350px;text-align:center;top:1392px;font-size:27px;color:#555">2025-10-10 09:15:48</div>
<div class="a" style="left:921px;width:350px;text-align:center;top:1392px;font-size:27px;color:#555">192</div>
<div class="a" style="left:1271px;width:350px;text-align:center;top:1392px;font-size:27px;color:#555">90.31</div>
<div class="a" style="left:1692px;top:1392px;font-size:28px;color:#555">次卡</div>
<div class="a" style="left:1794px;top:1365px;width:2px;height:78px;background:#e4e4e4"></div>
<div class="a" style="left:1800px;width:142px;text-align:center;top:1392px;font-size:27px;color:#555">90.31</div>
<div class="a" style="left:1976.0px;width:340px;text-align:center;top:1393px;font-size:28px;color:#555;font-weight:400;">纳客游乐场</div>
<div class="a" style="left:2786px;top:1372px;width:120px;height:64px;border:2px solid #86dcc0;background:#e6f8f1;border-radius:8px;color:#00c18c;font-size:28px;font-weight:500;-webkit-text-stroke:0.4px #00c18c;text-align:center;line-height:60px">详情</div>
<div class="a" style="left:215px;width:356px;text-align:center;top:1494px;font-size:27px;color:#555">XF197645654434763571</div>
<div class="a" style="left:215px;width:356px;text-align:center;top:1541px;font-size:27px;color:#555">2</div>
<div class="a" style="left:571px;width:350px;text-align:center;top:1518px;font-size:27px;color:#555">2025-10-10 09:15:35</div>
<div class="a" style="left:921px;width:350px;text-align:center;top:1518px;font-size:27px;color:#555">192</div>
<div class="a" style="left:1271px;width:350px;text-align:center;top:1518px;font-size:27px;color:#555">172.8</div>
<div class="a" style="left:1692px;top:1518px;font-size:28px;color:#555">余额</div>
<div class="a" style="left:1794px;top:1491px;width:2px;height:78px;background:#e4e4e4"></div>
<div class="a" style="left:1800px;width:142px;text-align:center;top:1518px;font-size:27px;color:#555">172.8</div>
<div class="a" style="left:1976.0px;width:340px;text-align:center;top:1519px;font-size:28px;color:#555;font-weight:400;">纳客游乐场</div>
<div class="a" style="left:2786px;top:1498px;width:120px;height:64px;border:2px solid #86dcc0;background:#e6f8f1;border-radius:8px;color:#00c18c;font-size:28px;font-weight:500;-webkit-text-stroke:0.4px #00c18c;text-align:center;line-height:60px">详情</div>
<div class="a" style="left:215px;width:356px;text-align:center;top:1620px;font-size:27px;color:#555">XF197645606487996825</div>
<div class="a" style="left:215px;width:356px;text-align:center;top:1667px;font-size:27px;color:#555">6</div>
<div class="a" style="left:571px;width:350px;text-align:center;top:1644px;font-size:27px;color:#555">2025-10-10 09:13:41</div>
<div class="a" style="left:921px;width:350px;text-align:center;top:1644px;font-size:27px;color:#555">384</div>
<div class="a" style="left:1271px;width:350px;text-align:center;top:1644px;font-size:27px;color:#555">180.62</div>
<div class="a" style="left:1692px;top:1644px;font-size:28px;color:#555">次卡</div>
<div class="a" style="left:1794px;top:1617px;width:2px;height:78px;background:#e4e4e4"></div>
<div class="a" style="left:1800px;width:142px;text-align:center;top:1644px;font-size:27px;color:#555">180.62</div>
<div class="a" style="left:1976.0px;width:340px;text-align:center;top:1645px;font-size:28px;color:#555;font-weight:400;">纳客游乐场</div>
<div class="a" style="left:2786px;top:1624px;width:120px;height:64px;border:2px solid #86dcc0;background:#e6f8f1;border-radius:8px;color:#00c18c;font-size:28px;font-weight:500;-webkit-text-stroke:0.4px #00c18c;text-align:center;line-height:60px">详情</div>
<div class="a" style="left:3102px;top:117px;width:4px;height:1640px;background:#ededed"></div>
<div class="a" style="left:3102px;top:117px;width:6px;height:1346px;background:#c1c1c1;border-radius:3px"></div>
</div></div>
</body>
</html>
